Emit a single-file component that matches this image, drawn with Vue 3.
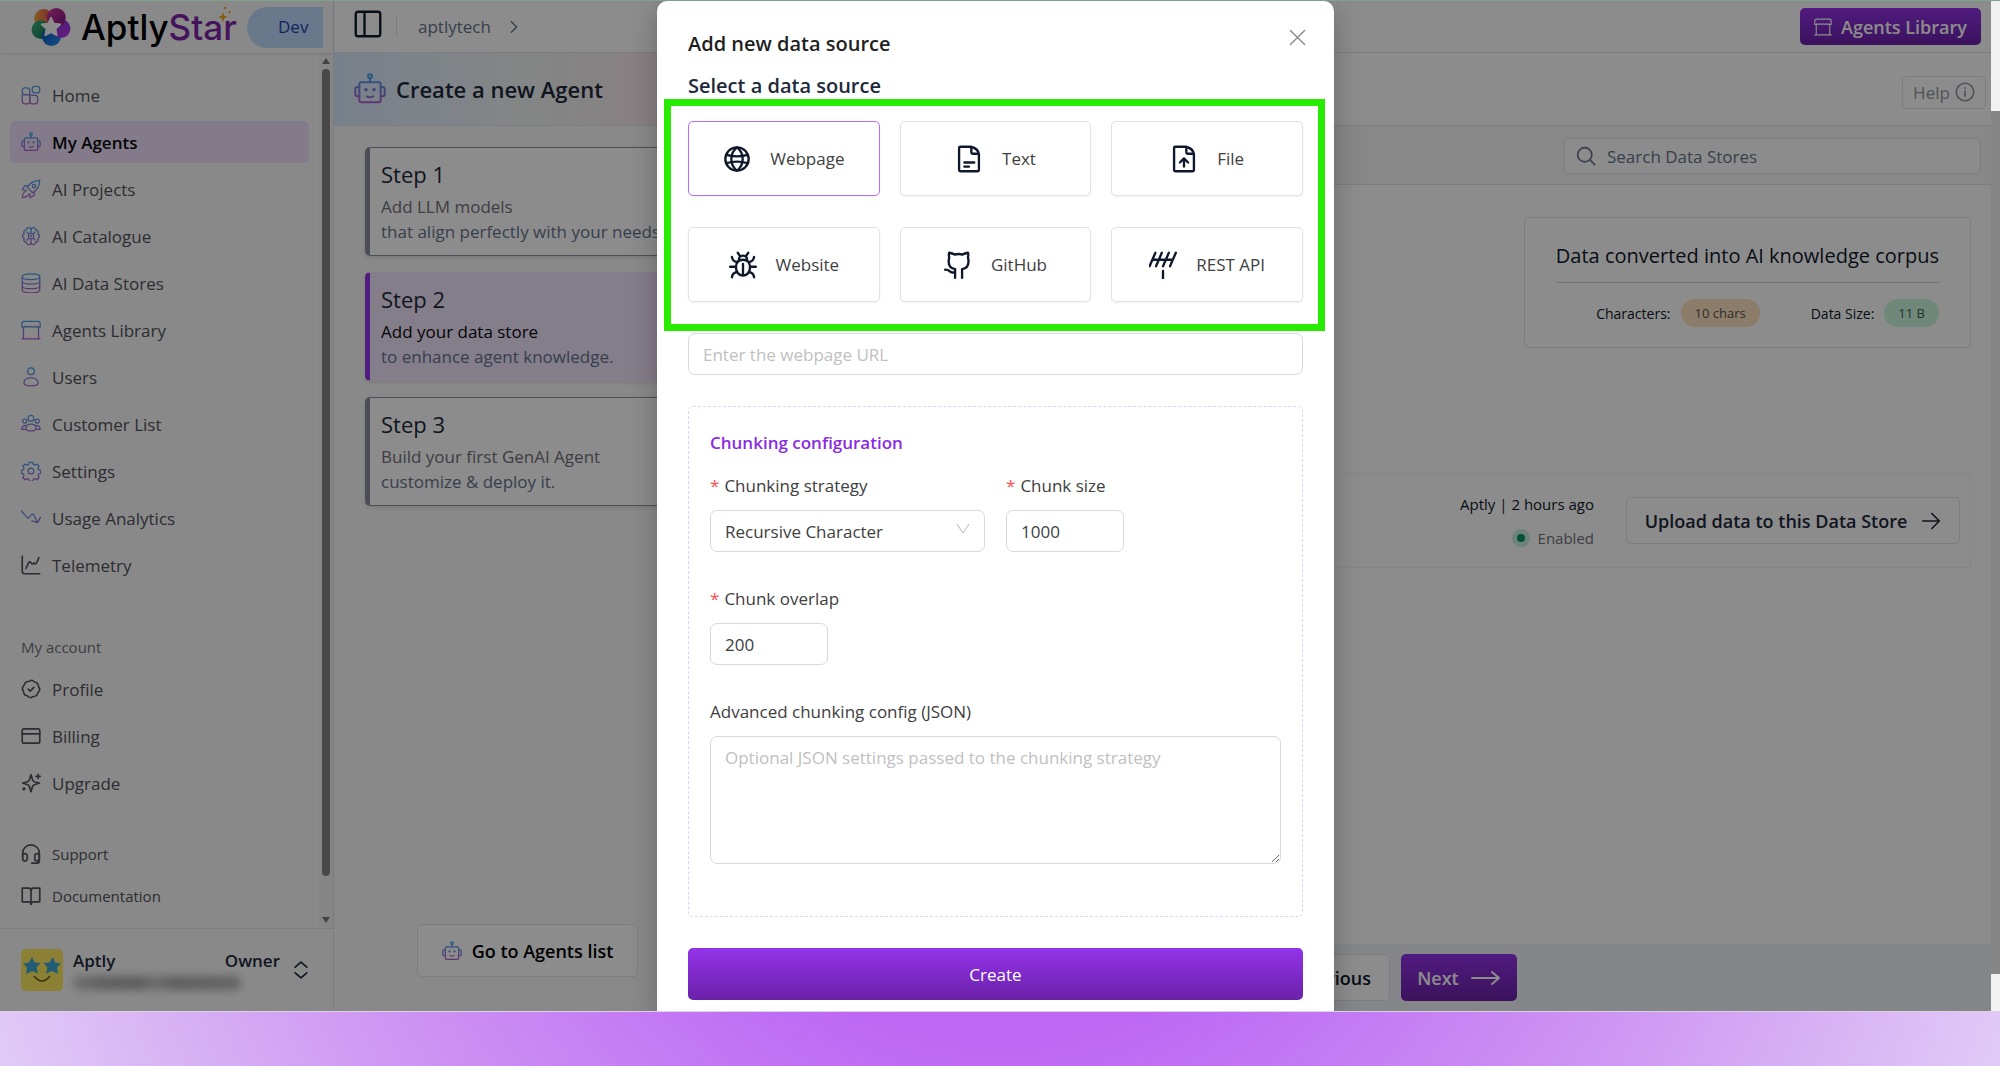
<template>
  <div class="page">
    <svg class="defs" aria-hidden="true">
      <defs>
        <linearGradient id="brand" gradientUnits="userSpaceOnUse" x1="0" y1="1" x2="0" y2="23">
          <stop offset="0" stop-color="#3fa6ea" />
          <stop offset="1" stop-color="#b45fcb" />
        </linearGradient>
      </defs>
    </svg>

    <div class="screen">
      <div class="app">
        <!-- Sidebar -->
        <aside class="sidebar">
          <div class="brand">
            <svg class="brand-mark" viewBox="0 0 38 38" aria-hidden="true">
              <defs>
                <linearGradient id="p1" x1="0" y1="0" x2="1" y2="0">
                  <stop offset="0" stop-color="#f5a83c" />
                  <stop offset="1" stop-color="#e8434f" />
                </linearGradient>
                <linearGradient id="p2" x1="0" y1="0" x2="1" y2="1">
                  <stop offset="0" stop-color="#d63a9a" />
                  <stop offset="1" stop-color="#7a1280" />
                </linearGradient>
                <linearGradient id="p3" x1="0" y1="0" x2="1" y2="1">
                  <stop offset="0" stop-color="#7b2bd0" />
                  <stop offset="1" stop-color="#c03cf0" />
                </linearGradient>
                <linearGradient id="p4" x1="0" y1="0" x2="1" y2="1">
                  <stop offset="0" stop-color="#0b4fb8" />
                  <stop offset="1" stop-color="#2492f5" />
                </linearGradient>
                <linearGradient id="p5" x1="0" y1="0" x2="1" y2="1">
                  <stop offset="0" stop-color="#3fb98a" />
                  <stop offset="1" stop-color="#0d6b45" />
                </linearGradient>
              </defs>
              <circle cx="12" cy="11" r="9" fill="url(#p1)" />
              <circle cx="9.5" cy="21.5" r="9" fill="url(#p5)" />
              <circle cx="19.5" cy="28" r="9" fill="url(#p4)" />
              <circle cx="28.5" cy="20.5" r="9" fill="url(#p3)" />
              <circle cx="24" cy="10" r="9" fill="url(#p2)" />
              <path
                d="M19 10l2.7 5.6 6.3.9-4.6 4.3 1.1 6.2-5.500-3-5.500 3 1.100-6.200-4.600-4.300 6.300-.9z"
                fill="#fff"
                stroke="#fff"
                stroke-width="1.5"
                stroke-linejoin="round"
              />
            </svg>
            <span class="brand-name">Aptly<span class="brand-star">Star</span></span>
            <svg class="brand-sparkle" viewBox="0 0 20 20" aria-hidden="true">
              <path d="M9 7l1.2 3.800L14 12l-3.800 1.200L9 17l-1.200-3.800L4 12l3.800-1.200z" />
              <circle cx="11" cy="3" r="1.2" />
              <circle cx="15.5" cy="7" r="1.2" />
            </svg>
            <span class="env">Dev</span>
          </div>

          <div class="nav-scroll">
            <nav class="nav">
              <a
                v-for="item in mainNav"
                :key="item.label"
                href="#"
                class="nav-item"
                :class="{ active: item.active }"
              >
                <Icon :name="item.icon" :brand="item.icon !== 'telemetry'" />
                <span>{{ item.label }}</span>
              </a>
              <p class="nav-heading">My account</p>
              <a v-for="item in accountNav" :key="item.label" href="#" class="nav-item">
                <Icon :name="item.icon" />
                <span>{{ item.label }}</span>
              </a>
              <div class="nav-small">
                <a v-for="item in helpNav" :key="item.label" href="#" class="nav-item">
                  <Icon :name="item.icon" />
                  <span>{{ item.label }}</span>
                </a>
              </div>
            </nav>
            <div class="nav-track" aria-hidden="true">
              <span class="arrow-up"></span>
              <span class="nav-thumb"></span>
              <span class="arrow-down"></span>
            </div>
          </div>

          <div class="user">
            <svg class="avatar" viewBox="0 0 42 42" aria-hidden="true">
              <rect width="42" height="42" rx="5" fill="#fde95e" />
              <path d="M11 8l2.500 5.500 6 .5-4 4.500 1.500 6-6-2.500-6 3 1-6.500L2 14.500l6-1z" fill="#3ba8d8" />
              <path d="M32 8l2 5.500 6 1-4 4 1 6.500-6-3-6 2.500 1.500-6L22.500 14l6-.5z" fill="#3ba8d8" />
              <path d="M13 27q8 10 16 0" fill="none" stroke="#6b5a20" stroke-width="1.5" />
            </svg>
            <div class="user-info">
              <div class="user-row">
                <strong>Aptly</strong>
                <strong>Owner</strong>
              </div>
              <div class="user-mail"></div>
            </div>
            <Icon name="updown" class="user-toggle" />
          </div>
        </aside>

        <!-- Main area -->
        <main class="main">
          <header class="topbar">
            <Icon name="panel" class="panel-icon" />
            <span class="divider"></span>
            <a href="#" class="crumb">aptlytech</a>
            <Icon name="chevron" class="crumb-arrow" />
            <button type="button" class="btn-primary library">
              <Icon name="library" />
              Agents Library
            </button>
          </header>

          <div class="title-bar">
            <Icon name="robot" brand class="title-icon" />
            <h1>Create a new Agent</h1>
            <button type="button" class="help">Help <Icon name="info" /></button>
          </div>

          <div class="content">
            <section class="steps">
              <div
                v-for="step in steps"
                :key="step.title"
                class="step"
                :class="{ current: step.current }"
              >
                <h2>{{ step.title }}</h2>
                <p class="step-lead">{{ step.lead }}</p>
                <p>{{ step.text }}</p>
              </div>
              <button type="button" class="btn-plain to-list">
                <Icon name="robot" brand />
                Go to Agents list
              </button>
            </section>

            <section class="stores">
              <div class="toolbar">
                <label class="search">
                  <Icon name="search" />
                  <input type="text" placeholder="Search Data Stores" aria-label="Search Data Stores" />
                </label>
              </div>
              <div class="stores-body">
                <div class="stats">
                  <h3>Data converted into AI knowledge corpus</h3>
                  <div class="stats-row">
                    <span class="stat">Characters: <b class="pill orange">10 chars</b></span>
                    <span class="stat">Data Size: <b class="pill green">11 B</b></span>
                  </div>
                </div>
                <div class="store-row">
                  <div class="store-meta">
                    <span>Aptly | 2 hours ago</span>
                    <span class="status"><i class="dot"></i>Enabled</span>
                  </div>
                  <button type="button" class="btn-plain upload">
                    Upload data to this Data Store
                    <Icon name="arrow" />
                  </button>
                </div>
              </div>
              <footer class="actions">
                <button type="button" class="btn-plain previous">Previous</button>
                <button type="button" class="btn-primary next">
                  Next
                  <svg class="long-arrow" viewBox="0 0 30 16" aria-hidden="true">
                    <path d="M1 8h27M21 2l7 6-7 6" />
                  </svg>
                </button>
              </footer>
            </section>
          </div>
        </main>

        <!-- Data source modal -->
        <div class="modal-overlay" role="dialog" aria-modal="true" aria-labelledby="modal-title">
          <form class="modal" @submit.prevent>
            <button type="button" class="modal-close" aria-label="Close">
              <Icon name="close" />
            </button>
            <h2 id="modal-title" class="modal-title">Add new data source</h2>
            <h3 class="modal-subtitle">Select a data source</h3>

            <div class="sources">
              <button
                v-for="source in sources"
                :key="source.label"
                type="button"
                class="source"
                :class="{ selected: source.label === selected }"
                @click="selected = source.label"
              >
                <Icon :name="source.icon" />
                <span>{{ source.label }}</span>
              </button>
              <div class="highlight"></div>
            </div>

            <input
              v-model="url"
              type="text"
              class="field url"
              placeholder="Enter the webpage URL"
              aria-label="Webpage URL"
            />

            <fieldset class="chunking">
              <h4>Chunking configuration</h4>
              <div class="form-row">
                <div class="form-item">
                  <label for="strategy" class="required">Chunking strategy</label>
                  <div class="select-wrap">
                    <select id="strategy" v-model="strategy" class="field">
                      <option>Recursive Character</option>
                    </select>
                    <svg class="select-arrow" viewBox="0 0 14 14" aria-hidden="true">
                      <path d="M1 2l6 9 6-9" />
                    </svg>
                  </div>
                </div>
                <div class="form-item">
                  <label for="size" class="required">Chunk size</label>
                  <input id="size" v-model="chunkSize" type="text" class="field short" />
                </div>
              </div>
              <div class="form-item">
                <label for="overlap" class="required">Chunk overlap</label>
                <input id="overlap" v-model="chunkOverlap" type="text" class="field short" />
              </div>
              <div class="form-item">
                <label for="advanced">Advanced chunking config (JSON)</label>
                <textarea
                  id="advanced"
                  v-model="advanced"
                  class="field"
                  placeholder="Optional JSON settings passed to the chunking strategy"
                ></textarea>
              </div>
            </fieldset>

            <button type="submit" class="btn-primary create">Create</button>
          </form>
        </div>
      </div>

      <div class="page-track" aria-hidden="true"><span class="page-thumb"></span></div>
    </div>
    <div class="strip"></div>
  </div>
</template>

<script setup>
import { h, ref } from 'vue'

const circle = (x, y, r) => `M${x - r} ${y}a${r} ${r} 0 1 0 ${r * 2} 0a${r} ${r} 0 1 0 ${-r * 2} 0`

// 24x24 stroke icons
const icons = {
  home: [
    'M4.5 3.5h3a3 3 0 0 1 3 3v5h-6a3 3 0 0 1-3-3v-2a3 3 0 0 1 3-3z',
    'M1.5 11.5h9v8a3 3 0 0 1-3 3h-3a3 3 0 0 1-3-3z',
    'M13 12.500h4a3 3 0 0 1 3 3v4a3 3 0 0 1-3 3h-3.500a3 3 0 0 1-3-3v-7z',
    'M16.5 1.5h3a3 3 0 0 1 3 3v2a3 3 0 0 1-3 3h-3a3 3 0 0 1-3-3v-2a3 3 0 0 1 3-3z'
  ],
  robot: [
    'M5.5 7h13a1.5 1.5 0 0 1 1.5 1.5v12a1.5 1.5 0 0 1-1.5 1.5h-13a1.5 1.5 0 0 1-1.500-1.500v-12a1.5 1.5 0 0 1 1.5-1.500z',
    'M4 10.5H2.500a1.5 1.5 0 0 0-1.500 1.5v4a1.5 1.5 0 0 0 1.5 1.5H4',
    'M20 10.5h1.5a1.5 1.5 0 0 1 1.5 1.5v4a1.5 1.5 0 0 1-1.500 1.5H20',
    'M12 7V4',
    circle(12, 2.5, 1.5),
    circle(9, 12.5, 0.6),
    circle(15, 12.5, 0.6),
    'M9.5 17.5q2.500 1.500 5 0'
  ],
  rocket: [
    'M22.5 1.500c-6 0-11 2-15 8.500l6.500 6.500c6.500-4 8.500-9 8.500-15z',
    circle(15.5, 8.5, 2),
    'M9 8H4.500L1.500 13l5 .5M16 15v4.500L11 22.500l-.5-5',
    'M5.500 15c-3 .5-3.500 4-4 7.500 3.500-.5 7-1 7.500-4'
  ],
  brain: [
    'M12 4c-1-3-5.500-2.500-5.500.5-3 0-4 3-2.500 5-3 1-3 4.500 0 5.500-1.500 2 0 5 2.500 4.500 0 3.500 4.500 4 5.500 1',
    'M12 4c1-3 5.500-2.500 5.500.5 3 0 4 3 2.500 5 3 1 3 4.500 0 5.500 1.500 2 0 5-2.500 4.500 0 3.500-4.500 4-5.500 1',
    'M9 9h6v6H9zM12 4v5M12 15v5.500M7 7l2 2M17 7l-2 2M7 17l2-2M17 17l-2-2',
    circle(12, 12, 0.7)
  ],
  database: [
    'M1.5 4.500c0-4.500 21-4.500 21 0s-21 4.500-21 0z',
    'M1.5 4.500v16c0 4.500 21 4.500 21 0v-16',
    'M1.5 10c0 4.500 21 4.500 21 0M1.500 15.500c0 4.500 21 4.500 21 0'
  ],
  library: [
    'M3.5 1.500h17q2.500 0 2.500 3v4h-3V7.500q-2 2-4 0-2 2-4 0-2 2-4 0-2 2-4 0v1H1v-4q0-3 2.500-3z',
    'M3 8.500V22M21 8.500V22M1 22.500h22'
  ],
  user: [circle(12, 5, 4), 'M3.500 19c0-8 17-8 17 0 0 5-17 5-17 0z'],
  users: [
    circle(12, 5, 3.5),
    circle(4.5, 8.5, 2.5),
    circle(19.5, 8.5, 2.5),
    'M6 17c0-6.500 12-6.500 12 0 0 4.500-12 4.500-12 0z',
    'M6 13.500c-3 0-5 2-5 5h5.500M18 13.500c3 0 5 2 5 5h-5.500'
  ],
  gear: [
    circle(12, 12, 3.5),
    'M10 1.500h4l.8 2.700 1.800.8 2.500-1.400 2.700 2.700-1.400 2.500.8 1.800 2.300.7v3.500l-2.300.7-.8 1.800 1.400 2.500-2.700 2.700-2.500-1.400-1.800.8-.8 2.400h-4l-.8-2.400-1.800-.8-2.500 1.400-2.700-2.700 1.400-2.500-.8-1.800-2.300-.7v-3.500l2.300-.7.8-1.800-1.400-2.500 2.700-2.700 2.500 1.400 1.800-.8z'
  ],
  trend: ['M0 3l7.500 8.500q1 1 2 0l3-3.500q1.500-1.500 3 .5l4 8.500', 'M13 15.500l7 2 3.500-6.500'],
  telemetry: ['M1.500 1.500v18a3 3 0 0 0 3 3h18', 'M6 16l3-6.500q1.500-2.500 3 0t3.500 0q1.500 3 4-1.500l2-5'],
  profile: [
    'M12 1.500q2 0 3.500 1.500t3.500 1.500q1.500 1.500 1.800 3.500t1.700 4q0 2-1.700 4t-1.800 3.500q-1.500 1.500-3.500 1.500t-3.500 1.500q-2 0-3.500-1.500T5 19.500q-1.500-1.500-1.800-3.500T1.500 12q0-2 1.700-4T5 4.500Q6.500 3 8.500 3T12 1.500z',
    'M8.500 12l2.500 2.500 4.500-4.500'
  ],
  card: [
    'M3.500 3.500h17a2 2 0 0 1 2 2v13a2 2 0 0 1-2 2h-17a2 2 0 0 1-2-2v-13a2 2 0 0 1 2-2z',
    'M1.500 9.500h21'
  ],
  sparkles: [
    'M12 2l2 6.500q.5 1.500 2 2L22 12l-6 2q-1.500.5-2 2l-2 6.500-2-6.500q-.5-1.500-2-2L2 12l6-1.500q1.500-.5 2-2z',
    'M20.500 1.500v5M18 4h5',
    circle(3.5, 19, 1)
  ],
  headset: [
    'M2 16v-5a10 10 0 0 1 20 0v5',
    'M2 13.500q0-2 2.500-2t3 2v4q0 3-2.500 3t-3-3zM22 13.500q0-2-2.500-2t-3 2v4q0 3 2.500 3t3-3z',
    'M22 17v3q0 3-3 3h-6'
  ],
  book: ['M12 5v17', 'M1.500 2.500H9q3 0 3 3 0-3 3-3h7.500V19H15q-3 0-3 3 0-3-3-3H1.500z'],
  updown: ['M5 8.500L12 2.500l7 6M5 15.500l7 6 7-6'],
  panel: ['M3.500 1.500h17a2 2 0 0 1 2 2v17a2 2 0 0 1-2 2h-17a2 2 0 0 1-2-2v-17a2 2 0 0 1 2-2zM9 1.500v21'],
  chevron: ['M8 4l8 8-8 8'],
  info: [circle(12, 12, 10.5), 'M12 11v6M12 7v.5'],
  search: [circle(10.5, 10.5, 8.5), 'M17 17l5.500 5.500'],
  arrow: ['M2 12h20M13 3l9 9-9 9'],
  close: ['M2 2l20 20M22 2L2 22'],
  globe: [
    circle(12, 12, 10),
    'M12 2c-6.500 5-6.500 15 0 20 6.500-5 6.500-15 0-20z',
    'M3 8.500q9 2.500 18 0M3 15.500q9-2.500 18 0'
  ],
  text: [
    'M5 1.500h8.500Q20 3 20.500 8v13.500q0 1-1 1H4.500q-1 0-1-1v-19q0-1 1-1z',
    'M14 2v4q0 1.500 1.500 1.500h4.500M8 15h8.500M8 18.500h4'
  ],
  file: [
    'M5 1.500h8.500Q20 3 20.500 8v13.500q0 1-1 1H4.500q-1 0-1-1v-19q0-1 1-1z',
    'M14 2v4q0 1.500 1.500 1.500h4.500M12 18.500v-7M8.500 15l3.500-3.500 3.500 3.500'
  ],
  bug: [
    'M12 7.500c4.500 0 6 3 6 6.500s-2 7-6 7-6-3.500-6-7 1.500-6.500 6-6.500zM12 11v10',
    'M8.500 7.500q0-3.500 3.500-3.500t3.500 3.500M7.500 1.500l2 3M16.500 1.500l-2 3',
    'M1 13.500h5M18 13.500h5M2.500 5q.5 4 4.500 4.500M21.500 5q-.5 4-4.500 4.500M2.500 22.500q.5-4 4.500-4.500M21.500 22.500q-.5-4-4.500-4.500'
  ],
  github: [
    'M9.500 23v-5M15.500 23v-7.500M9.500 18q-3 1-4.500-.5-1.500-1.500-4-1.500M9.500 23v-7.500C6 15 4 12.500 4 9q0-2 .5-3.500-.7-2 0-4Q7.500 2 9 3q3.500-.8 7 0 1.500-1 4.500-1.500.7 2 0 4 .5 1.500.5 3.500c0 3.500-2 6-5.500 6.500'
  ],
  antenna: [
    'M5.500 1.500L.5 13M11 1.500L6 13M17 1.500L12 13M23 1.500L18 13M3 7.500h17.500M12 17v6.500'
  ]
}

const Icon = (props) =>
  h(
    'svg',
    {
      viewBox: '0 0 24 24',
      class: 'icon',
      fill: 'none',
      stroke: props.brand ? 'url(#brand)' : 'currentColor',
      'stroke-width': props.brand ? 1.5 : 2,
      'stroke-linecap': 'round',
      'stroke-linejoin': 'round',
      'aria-hidden': 'true'
    },
    icons[props.name].map((d) => h('path', { d }))
  )
Icon.props = { name: String, brand: Boolean }

const mainNav = [
  { label: 'Home', icon: 'home' },
  { label: 'My Agents', icon: 'robot', active: true },
  { label: 'AI Projects', icon: 'rocket' },
  { label: 'AI Catalogue', icon: 'brain' },
  { label: 'AI Data Stores', icon: 'database' },
  { label: 'Agents Library', icon: 'library' },
  { label: 'Users', icon: 'user' },
  { label: 'Customer List', icon: 'users' },
  { label: 'Settings', icon: 'gear' },
  { label: 'Usage Analytics', icon: 'trend' },
  { label: 'Telemetry', icon: 'telemetry' }
]

const accountNav = [
  { label: 'Profile', icon: 'profile' },
  { label: 'Billing', icon: 'card' },
  { label: 'Upgrade', icon: 'sparkles' }
]

const helpNav = [
  { label: 'Support', icon: 'headset' },
  { label: 'Documentation', icon: 'book' }
]

const steps = [
  { title: 'Step 1', lead: 'Add LLM models', text: 'that align perfectly with your needs.' },
  { title: 'Step 2', lead: 'Add your data store', text: 'to enhance agent knowledge.', current: true },
  { title: 'Step 3', lead: 'Build your first GenAI Agent', text: 'customize & deploy it.' }
]

const sources = [
  { label: 'Webpage', icon: 'globe' },
  { label: 'Text', icon: 'text' },
  { label: 'File', icon: 'file' },
  { label: 'Website', icon: 'bug' },
  { label: 'GitHub', icon: 'github' },
  { label: 'REST API', icon: 'antenna' }
]

const selected = ref('Webpage')
const url = ref('')
const strategy = ref('Recursive Character')
const chunkSize = ref('1000')
const chunkOverlap = ref('200')
const advanced = ref('')
</script>

<style>
body {
  overflow: hidden;
}
</style>

<style scoped>
.page,
.page * {
  box-sizing: border-box;
}

.page {
  display: flex;
  flex-direction: column;
  height: 100vh;
  border-top: 1px solid #7ba28d;
  background: #fff;
  color: #0f172a;
  font-family: 'Open Sans', 'Noto Sans', sans-serif;
  font-size: 17px;
}

.page h1,
.page h2,
.page h3,
.page h4,
.page p {
  margin: 0;
}

.page button,
.page input,
.page select,
.page textarea {
  font: inherit;
  color: inherit;
}

.page button {
  display: flex;
  align-items: center;
  justify-content: center;
  padding: 0;
  cursor: pointer;
}

.page a {
  color: inherit;
  text-decoration: none;
}

.defs {
  position: absolute;
  width: 0;
  height: 0;
}

.icon {
  flex: none;
  width: 20px;
  height: 20px;
}

.screen {
  display: flex;
  flex: 1;
  min-height: 0;
}

.app {
  position: relative;
  display: flex;
  flex: 1;
  min-width: 0;
  overflow: hidden;
}

.strip {
  flex: none;
  height: 55px;
  border-top: 1px solid #dccfe6;
  background: radial-gradient(ellipse 60% 2200% at 50% -550%, #bd67f4 27%, #d09cf3 61%, #e1caf6 88%);
}

.page-track {
  width: 9px;
  padding: 110px 0 37px;
  background: #f1f1f1;
}

.page-thumb {
  display: block;
  height: 100%;
  background: #868686;
}

/* Sidebar */
.sidebar {
  display: flex;
  flex-direction: column;
  flex: none;
  width: 334px;
  border-right: 1px solid #e2e4ee;
  background: #fafafa;
  color: #52525b;
}

.brand {
  position: relative;
  display: flex;
  align-items: center;
  height: 52px;
  padding: 0 10px 0 31px;
  box-shadow: 0 1px 2px rgba(0, 0, 0, 0.12);
}

.brand-mark {
  width: 40px;
  height: 40px;
}

.brand-name {
  margin-left: 10px;
  color: #000;
  font-family: Inter, sans-serif;
  font-size: 35px;
  font-weight: 500;
  line-height: 40px;
}

.brand-star {
  color: #7e22a8;
}

.brand-sparkle {
  position: absolute;
  top: 4px;
  left: 214px;
  width: 20px;
  height: 20px;
  fill: #f0a818;
}

.env {
  width: 76px;
  height: 41px;
  margin-left: auto;
  padding-left: 31px;
  border-radius: 21px 0 0 21px;
  background: #bfdbfe;
  color: #1e40af;
  font-size: 17px;
  font-weight: 500;
  line-height: 40px;
}

.nav-scroll {
  display: flex;
  flex: 1;
  min-height: 0;
}

.nav {
  display: flex;
  flex-direction: column;
  flex: 1;
  gap: 5px;
  padding: 21px 10px 0;
}

.nav-item {
  display: flex;
  align-items: center;
  flex: none;
  gap: 11px;
  height: 42px;
  padding: 0 11px;
  border-radius: 5px;
}

.nav-item.active {
  background: #eee1fb;
  font-weight: 600;
}

.page .nav-item.active {
  color: #09090b;
}

.page .nav-heading {
  margin: 44px 0 4px;
  padding: 0 11px;
  color: #71717a;
  font-size: 15px;
  font-weight: 500;
  line-height: 24px;
}

.nav-small {
  display: flex;
  flex-direction: column;
  gap: 4px;
  margin-top: 26px;
  font-size: 15px;
}

.nav-small .nav-item {
  height: 38px;
}

.nav-track {
  display: flex;
  flex-direction: column;
  align-items: center;
  width: 14px;
  padding: 5px 0;
  background: #f4f4f5;
}

.nav-thumb {
  flex: 1;
  width: 8px;
  margin: 5px 0 41px;
  border-radius: 4px;
  background: #858585;
}

.arrow-up,
.arrow-down {
  border: 4px solid transparent;
  border-top-width: 0;
  border-bottom: 6px solid #7a7a7a;
}

.arrow-down {
  border-top: 6px solid #7a7a7a;
  border-bottom-width: 0;
}

.user {
  display: flex;
  align-items: center;
  flex: none;
  height: 83px;
  padding: 0 22px 0 21px;
  border-top: 1px solid #e4e4ec;
  color: #1e293b;
}

.avatar {
  width: 42px;
  height: 42px;
}

.user-info {
  flex: 1;
  margin: 0 11px 0 10px;
}

.user-row {
  display: flex;
  justify-content: space-between;
  font-size: 17px;
  line-height: 24px;
}

.user-row strong {
  font-weight: 600;
}

.user-mail {
  width: 168px;
  height: 14px;
  margin: 3px 0 2px;
  border-radius: 7px;
  background: linear-gradient(90deg, #c6c6c6, #aeaeae 18%, #a8a8a8 40%, #c4c4c4 48%, #acacac 60%, #b4b4b4);
  filter: blur(4px);
}

/* Top of main area */
.main {
  display: flex;
  flex-direction: column;
  flex: 1;
  min-width: 0;
}

.topbar {
  display: flex;
  align-items: center;
  flex: none;
  height: 52px;
  padding: 0 10px 0 20px;
  border-bottom: 1px solid #e2e2f0;
}

.panel-icon {
  width: 28px;
  height: 28px;
  margin-bottom: 5px;
}

.divider {
  width: 1px;
  height: 21px;
  margin: 0 21px 0 14px;
  background: #e2e2ee;
}

.page .crumb {
  color: #64748b;
}

.crumb-arrow {
  width: 16px;
  height: 16px;
  margin-left: 15px;
  color: #64748b;
}

.btn-primary {
  border: 0;
  border-radius: 5px;
  background: linear-gradient(#9333ea, #6b21a8);
}

.page .btn-primary {
  color: #fff;
}

.btn-plain {
  border: 1px solid #e2e2ee;
  border-radius: 5px;
  background: #fff;
}

.library {
  gap: 9px;
  width: 181px;
  height: 37px;
  margin-left: auto;
}

.library .icon {
  width: 18px;
  height: 18px;
  stroke-width: 1.5;
}

.page .library {
  font-size: 18px;
  font-weight: 600;
}

.title-bar {
  display: flex;
  align-items: center;
  flex: none;
  height: 73px;
  padding: 0 5px 0 20px;
  border-bottom: 1px solid #e2e2f0;
  background: linear-gradient(90deg, #dbeafe 0, #f0f4f4 11%, #f5eef1 16%, #fbe7ee 21%, #fff 60%);
}

.title-icon {
  width: 32px;
  height: 32px;
}

.title-bar h1 {
  margin-left: 10px;
  color: #1e293b;
  font-size: 22px;
  font-weight: 600;
}

.help {
  gap: 5px;
  width: 84px;
  height: 33px;
  margin-top: 6px;
  margin-left: auto;
  border: 1px solid #e2e2ee;
  border-radius: 5px;
  background: transparent;
}

.page .help {
  color: #94979f;
}

.content {
  display: flex;
  flex: 1;
  min-height: 0;
}

/* Wizard steps */
.steps {
  display: flex;
  flex-direction: column;
  flex: none;
  gap: 16px;
  width: 387px;
  padding: 21px 31px 34px;
  background: #fafafa;
}

.step {
  height: 109px;
  padding: 11px 11px 0;
  border: 1px solid #8b93a3;
  border-left: 5px solid #8b8f9c;
  border-radius: 5px;
  background: #fff;
  box-shadow: 0 2px 4px rgba(0, 0, 0, 0.1);
  color: #64748b;
  line-height: 25px;
  white-space: nowrap;
}

.page .step h2 {
  margin-bottom: 5px;
  color: #1e293b;
  font-size: 22px;
  font-weight: 400;
  line-height: 30px;
}

.step-lead {
  color: #71717a;
}

.step.current {
  border-color: #f0e4fc;
  border-left-color: #9333ea;
  background: #f0e4fc;
}

.step.current .step-lead {
  color: #09090b;
}

.to-list {
  align-self: center;
  gap: 10px;
  width: 221px;
  height: 53px;
  margin-top: auto;
}

.page .to-list {
  color: #000;
  font-size: 18px;
  font-weight: 600;
}

/* Data stores */
.stores {
  display: flex;
  flex-direction: column;
  flex: 1;
  min-width: 0;
}

.toolbar {
  display: flex;
  align-items: center;
  justify-content: flex-end;
  height: 59px;
  padding: 2px 10px 0;
  border-bottom: 1px solid #e2e2ee;
  background: #f8f8f9;
}

.search {
  display: flex;
  align-items: center;
  gap: 11px;
  width: 417px;
  height: 36px;
  padding: 0 11px;
  border: 1px solid #e2e2ee;
  border-radius: 5px;
  background: #fff;
  color: #64748b;
}

.search input {
  flex: 1;
  min-width: 0;
  padding: 0;
  border: 0;
  outline: 0;
  background: transparent;
}

.search input::placeholder {
  color: #64748b;
}

.stores-body {
  display: flex;
  flex-direction: column;
  flex: 1;
  padding: 32px 20px 0;
}

.stats {
  align-self: flex-end;
  height: 131px;
  padding: 22px 31px 0;
  border: 1px solid #e2e2ee;
  border-radius: 5px;
}

.page .stats h3 {
  padding-bottom: 10px;
  border-bottom: 1px solid #cbd5e1;
  font-size: 20px;
  font-weight: 400;
  line-height: 32px;
}

.stats-row {
  display: flex;
  justify-content: flex-end;
  gap: 51px;
  margin-top: 16px;
  font-size: 14px;
}

.stat {
  display: flex;
  align-items: center;
  gap: 10px;
}

.pill {
  padding: 0 14px;
  border-radius: 14px;
  font-size: 13px;
  font-weight: 400;
  line-height: 28px;
}

.pill.orange {
  background: #ffe3c2;
  color: #57534e;
}

.pill.green {
  background: #cdf7df;
  color: #3f6350;
}

.store-row {
  display: flex;
  align-items: center;
  justify-content: flex-end;
  gap: 32px;
  height: 95px;
  margin-top: 125px;
  padding: 0 10px;
  border: 1px solid #f4f4f7;
  font-size: 15px;
}

.store-meta {
  display: flex;
  flex-direction: column;
  align-items: flex-end;
  gap: 10px;
  line-height: 24px;
}

.status {
  display: flex;
  align-items: center;
  gap: 8px;
  color: #71717a;
}

.dot {
  width: 18px;
  height: 18px;
  border: 5px solid #c8eedd;
  border-radius: 50%;
  background: #059669;
}

.upload {
  gap: 14px;
  width: 334px;
  height: 47px;
}

.page .upload {
  color: #1e293b;
  font-size: 18px;
  font-weight: 600;
}

.actions {
  display: flex;
  align-items: center;
  flex: none;
  gap: 11px;
  height: 67px;
  padding-left: 556px;
  background: #f1f5f9;
}

.previous {
  width: 113px;
  height: 47px;
}

.next {
  gap: 12px;
  width: 116px;
  height: 47px;
}

.page .previous,
.page .next {
  font-size: 18px;
  font-weight: 600;
}

.long-arrow {
  width: 30px;
  height: 16px;
  fill: none;
  stroke: currentColor;
  stroke-width: 2;
  stroke-linecap: round;
  stroke-linejoin: round;
}

/* Modal */
.modal-overlay {
  position: absolute;
  inset: 0;
  z-index: 10;
  display: flex;
  justify-content: center;
  background: rgba(0, 0, 0, 0.45);
}

.modal {
  position: relative;
  width: 677px;
  padding: 28px 31px 0;
  border-radius: 10px 10px 0 0;
  background: #fff;
  box-shadow: 0 8px 28px rgba(0, 0, 0, 0.25);
  color: #404040;
}

.modal-close {
  position: absolute;
  top: 28px;
  right: 28px;
  border: 0;
  background: none;
}

.modal-close .icon {
  width: 17px;
  height: 17px;
}

.page .modal-close {
  color: #8a8a8a;
}

.modal-title {
  color: #1f1f1f;
  font-size: 20px;
  font-weight: 600;
  line-height: 30px;
}

.page .modal-subtitle {
  margin: 12px 0 20px;
  color: #1e293b;
  font-size: 20px;
  font-weight: 600;
  line-height: 30px;
}

.sources {
  position: relative;
  display: grid;
  grid-template-columns: repeat(3, 1fr);
  gap: 31px 20px;
}

.source {
  gap: 19px;
  height: 75px;
  border: 1px solid #dfe2e8;
  border-radius: 5px;
  background: #fff;
  box-shadow: 0 1px 2px rgba(0, 0, 0, 0.06);
}

.source .icon {
  width: 28px;
  height: 28px;
  color: #0f172a;
}

.source.selected {
  border-color: #b76cf7;
}

.highlight {
  position: absolute;
  inset: -22px -22px -29px -24px;
  border: 7px solid #27ec00;
  pointer-events: none;
}

.field {
  display: block;
  width: 100%;
  height: 42px;
  padding: 0 14px;
  border: 1px solid #d9d9d9;
  border-radius: 7px;
  outline: 0;
  background: #fff;
}

.field::placeholder {
  color: #bfbfbf;
}

.url {
  margin: 31px 0;
}

.chunking {
  min-width: 0;
  margin: 0 0 31px;
  padding: 23px 21px 52px;
  border: 1px dashed #e4d0fc;
  border-radius: 5px;
}

.page .chunking h4 {
  margin-bottom: 18px;
  color: #8a2be2;
  font-size: 17px;
  font-weight: 600;
  line-height: 26px;
}

.form-row {
  display: flex;
  gap: 21px;
}

.form-item + .form-item,
.form-row + .form-item {
  margin-top: 35px;
}

.form-row .form-item {
  margin-top: 0;
}

.form-item label {
  display: block;
  margin-bottom: 12px;
  line-height: 24px;
}

.required::before {
  margin-right: 5px;
  color: #ff4d4f;
  content: '*';
}

.select-wrap {
  position: relative;
  width: 275px;
}

select.field {
  appearance: none;
}

.select-arrow {
  position: absolute;
  top: 12px;
  right: 15px;
  width: 14px;
  height: 14px;
  fill: none;
  stroke: #b5b5b5;
  stroke-width: 1;
  pointer-events: none;
}

.field.short {
  width: 118px;
}

textarea.field {
  height: 128px;
  padding: 8px 14px;
  line-height: 26px;
  resize: vertical;
}

.create {
  width: 100%;
  height: 52px;
}
</style>
